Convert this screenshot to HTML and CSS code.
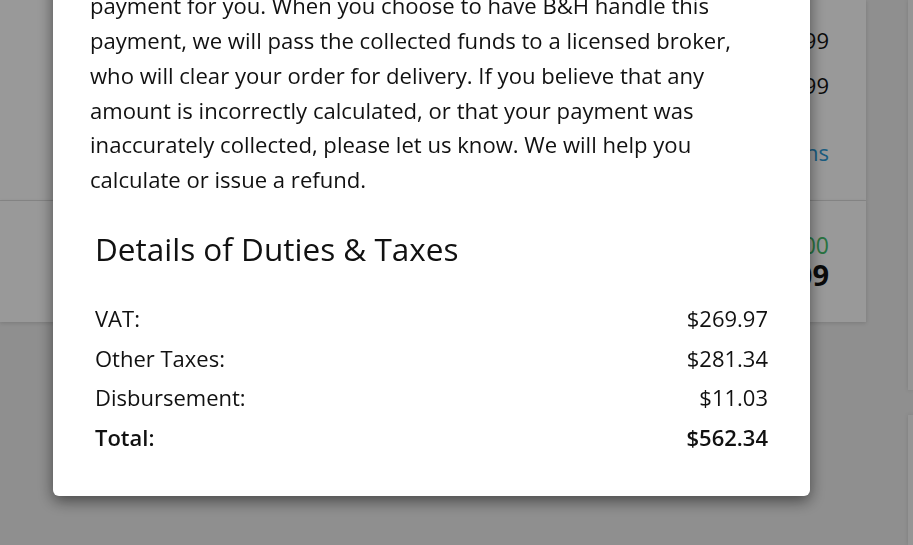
FILE: index.html
```html
<!DOCTYPE html>
<html lang="en">
<head>
	<meta charset="UTF-8">
	<title>Duties &amp; Taxes</title>
	<link rel="stylesheet" href="styles.css">
</head>
<body>
	<div class="page">
		<div class="main">
			<div class="card summary">
				<div class="row"><span class="label">Subtotal</span><span class="price">$2,699.99</span></div>
				<div class="row"><span class="label">Duties &amp; Taxes</span><span class="price">$2,699.99</span></div>
				<div class="row link"><a href="#">Details &amp; Options</a></div>
			</div>
			<div class="card total">
				<div class="row save"><span class="label">Shipping</span><span class="price">$0.00</span></div>
				<div class="row grand"><span class="label">Order Total</span><span class="price">$3,262.09</span></div>
			</div>
		</div>
		<div class="side">
			<div class="box"></div>
			<div class="box"></div>
		</div>
	</div>

	<div class="overlay">
		<div class="modal">
			<p class="info">International orders may be subject to import duties and taxes. B&amp;H can collect this<br>payment for you. When you choose to have B&amp;H handle this payment, we will pass the collected funds to a licensed broker, who will clear your order for delivery. If you believe that any amount is incorrectly calculated, or that your payment was inaccurately collected, please let us know. We will help you calculate or issue a refund.</p>
			<h2>Details of Duties &amp; Taxes</h2>
			<ul class="lines">
				<li><span>VAT:</span><span>$269.97</span></li>
				<li><span>Other Taxes:</span><span>$281.34</span></li>
				<li><span>Disbursement:</span><span>$11.03</span></li>
				<li class="sum"><span>Total:</span><span>$562.34</span></li>
			</ul>
		</div>
	</div>
</body>
</html>
```

FILE: styles.css
```css
*{
	margin: 0;
	padding: 0;
	box-sizing: border-box;
}
html, body{
	height: 100%;
}
body{
	background-color: #eeeeee;
	font-family: "Open Sans", "Liberation Sans", sans-serif;
	color: #111;
	overflow: hidden;
}
.page{
	display: flex;
	gap: 42px;
	height: 100%;
}
.main{
	width: 866px;
	flex-shrink: 0;
}
.card{
	background-color: #fff;
	box-shadow: 0 1px 4px rgba(0,0,0,.15);
	padding: 0 37px 0 110px;
}
.card .row{
	display: flex;
	justify-content: space-between;
}
.summary{
	height: 201px;
	padding-top: 24px;
	border-bottom: 1px solid #e2e2e2;
	font-size: 22px;
	line-height: 32px;
}
.summary .row + .row{
	margin-top: 13px;
}
.summary .row.link{
	margin-top: 35px;
	justify-content: flex-end;
}
.summary .row.link a{
	color: #2e9ad6;
	text-decoration: none;
}
.total{
	height: 121px;
	padding-top: 30px;
}
.total .save{
	font-size: 23px;
	line-height: 29px;
	color: #45c06c;
}
.total .grand{
	font-size: 29px;
	line-height: 30px;
	font-weight: bold;
}
.side{
	flex: 1;
	display: flex;
	flex-direction: column;
	gap: 25px;
}
.side .box{
	background-color: #f9f9f9;
	box-shadow: 0 0 4px rgba(0,0,0,.12);
	height: 390px;
}
.side .box + .box{
	flex: 1;
}

/* modal over the page */
.overlay{
	position: fixed;
	top: 0;
	left: 0;
	right: 0;
	bottom: 0;
	background-color: rgba(0,0,0,.4);
}
.modal{
	position: absolute;
	left: 53px;
	bottom: 49px;
	width: 757px;
	background-color: #fff;
	border-radius: 6px;
	box-shadow: 0 5px 15px rgba(0,0,0,.5);
	padding: 0 42px 39px;
}
.modal .info{
	margin: 0 -5px;
	font-size: 22.1px;
	line-height: 34.8px;
}
.modal h2{
	margin-top: 34px;
	font-size: 31.5px;
	line-height: 35px;
	font-weight: normal;
}
.modal .lines{
	list-style: none;
	margin-top: 33px;
	font-size: 22px;
	line-height: 39.5px;
}
.modal .lines li{
	display: flex;
	justify-content: space-between;
}
.modal .lines li.sum{
	font-weight: 600;
}
```
